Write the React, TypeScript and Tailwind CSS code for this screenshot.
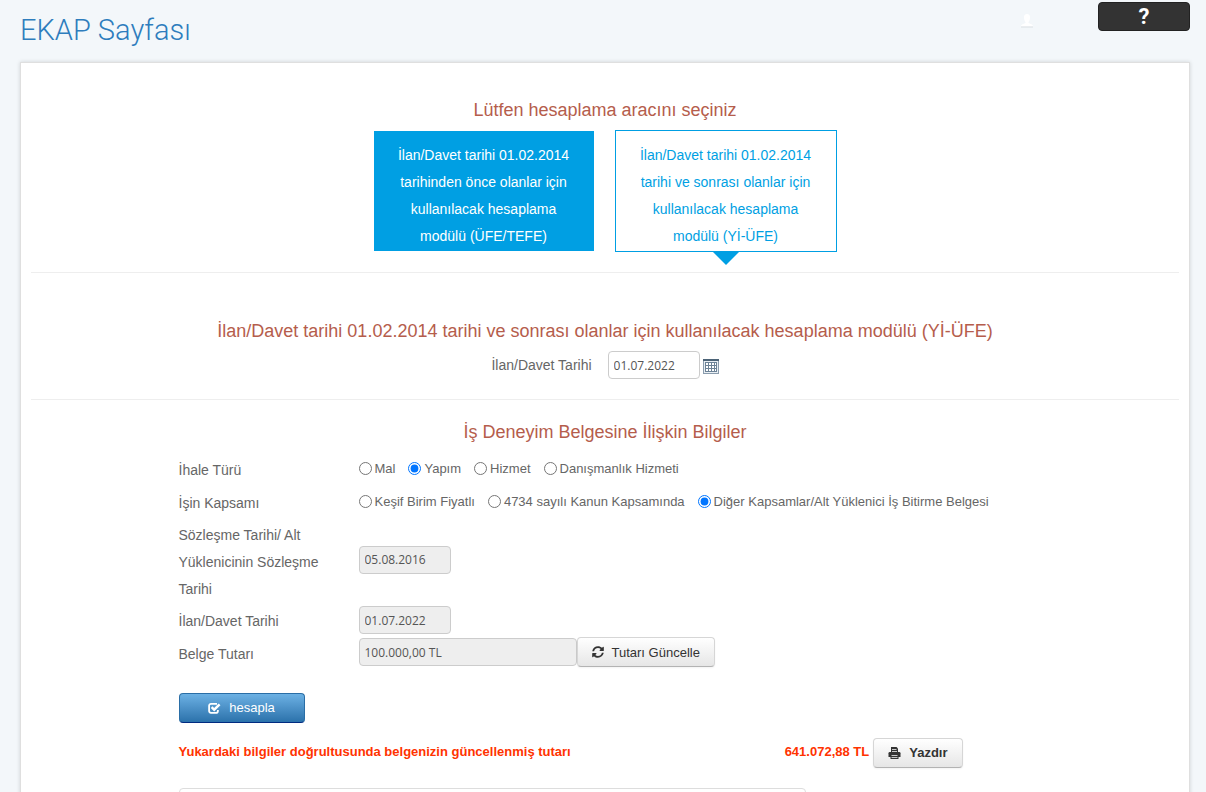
import type { ReactNode } from "react";
import { FaSyncAlt } from "react-icons/fa";

const tenderTypes = ["Mal", "Yapım", "Hizmet", "Danışmanlık Hizmeti"];

const scopes = [
  "Keşif Birim Fiyatlı",
  "4734 sayılı Kanun Kapsamında",
  "Diğer Kapsamlar/Alt Yüklenici İş Bitirme Belgesi",
];

const greyButton =
  "flex h-[30px] cursor-pointer items-center gap-2 rounded border border-[#d6d6d6] border-b-[#b3b3b3] bg-linear-to-b from-white to-[#e6e6e6] text-[13px] text-[#333] shadow-xs";

const readOnlyInput =
  "h-7 rounded border border-[#ccc] bg-[#eee] px-[5px] font-['Open_Sans','Noto_Sans',sans-serif] text-xs text-[#555]";

function SectionTitle({ children }: { children: ReactNode }) {
  return <h2 className="text-center text-lg leading-5 text-[#b55d4c]">{children}</h2>;
}

function CalendarIcon() {
  return (
    <svg width="16" height="16" viewBox="0 0 16 16" shapeRendering="crispEdges" aria-hidden="true">
      <rect x="0" y="1" width="16" height="15" fill="#8a9cad" />
      <rect x="0" y="1" width="16" height="2" fill="#4c6377" />
      <rect x="1" y="3" width="14" height="12" fill="#e8eef3" />
      <rect x="2" y="4" width="12" height="10" fill="#6c8296" />
      {[3, 6, 9, 12].map((x) =>
        [5, 8, 11].map((y) => (
          <rect key={`${x}-${y}`} x={x} y={y} width={x === 12 ? 1 : 2} height="2" fill="#fff" />
        )),
      )}
    </svg>
  );
}

function UserIcon() {
  return (
    <svg width="14" height="14" viewBox="0 0 14 14" aria-hidden="true">
      <path
        d="M7 0C5 0 3.800 1.500 4 3.500C4.100 5.500 4.600 7 5.500 8V9C4 10 1 10 1 12.500H13C13 10 10 10 8.500 9V8C9.400 7 9.900 5.500 10 3.500C10.200 1.500 9 0 7 0Z"
        fill="#fff"
      />
      <path d="M1 13H13" stroke="#dadfe2" />
    </svg>
  );
}

function CheckIcon() {
  return (
    <svg width="13" height="12" viewBox="0 0 13 12" fill="none" stroke="currentColor" aria-hidden="true">
      <path d="M9 1.800H3A1.900 1.900 0 0 0 1.100 3.700V8.900A1.900 1.900 0 0 0 3 10.800H8A1.900 1.900 0 0 0 9.900 8.900V8" strokeWidth="1.800" />
      <path d="M3.600 5.200L6.200 7.700L11.600 2.300" strokeWidth="2.400" />
    </svg>
  );
}

function PrintIcon() {
  return (
    <svg width="13" height="12" viewBox="0 0 13 12" fill="currentColor" aria-hidden="true">
      <path d="M3 0H8.500L10 1.500V5H3Z" />
      <path d="M1.800 5H11.200Q12.500 5 12.500 6.300V10H0.500V6.300Q0.500 5 1.800 5Z" />
      <path d="M2.500 8.500H10.500V12H2.500Z" />
      <path d="M4 2.500H8.500M4 4.500H9M3.500 8.500H9.500M3.500 10.500H9.500" stroke="#eee" strokeWidth="0.800" />
    </svg>
  );
}

function RadioGroup({ name, label, options, selected }: { name: string; label: string; options: string[]; selected: string }) {
  return (
    <div role="radiogroup" aria-label={label} className="flex flex-wrap items-center gap-x-[13px] pb-1 text-[13px]">
      {options.map((option) => (
        <label key={option} className="flex items-center gap-[3px]">
          <input
            type="radio"
            name={name}
            defaultChecked={option === selected}
            className="size-[13px] accent-[#0075ff]"
          />
          {option}
        </label>
      ))}
    </div>
  );
}

export default function App() {
  return (
    <div className="h-screen overflow-hidden bg-[#f3f7fa] pr-4 pl-5 font-['Liberation_Sans',Arial,sans-serif] text-sm text-[#666]">
      <header className="flex h-[62px] items-start justify-between">
        <h1 className="pt-3 font-[Roboto,sans-serif] text-[29px] leading-9 font-light text-[#2e7dbd]">
          EKAP Sayfası
        </h1>
        <div className="flex items-start gap-16 pt-0.5">
          <button type="button" aria-label="Kullanıcı" className="mt-3">
            <UserIcon />
          </button>
          <button
            type="button"
            className="h-[29px] w-[92px] rounded border border-[#222] bg-[#333] font-[Roboto,sans-serif] text-[22px] leading-none font-bold text-white"
          >
            ?
          </button>
        </div>
      </header>

      <main className="border border-[#dfdfdf] bg-white px-[10px] shadow-[0_0_4px_rgba(0,0,0,0.15)]">
        <section className="border-b border-[#eee] pt-[37px] pb-5">
          <SectionTitle>Lütfen hesaplama aracını seçiniz</SectionTitle>
          <div className="mt-[10px] flex items-center justify-center gap-[21px]">
            <button
              type="button"
              className="h-[120px] w-[220px] bg-[#009fe3] px-4 pt-[9px] text-center text-sm leading-[27px] text-white"
            >
              İlan/Davet tarihi 01.02.2014 tarihinden önce olanlar için kullanılacak hesaplama modülü (ÜFE/TEFE)
            </button>
            <button
              type="button"
              className="relative h-[122px] w-[222px] border border-[#009fe3] px-4 pt-[9px] text-center text-sm leading-[27px] text-[#009fe3]"
            >
              İlan/Davet tarihi 01.02.2014 tarihi ve sonrası olanlar için kullanılacak hesaplama modülü (Yİ-ÜFE)
              <span className="absolute top-full left-1/2 -translate-x-1/2 border-x-14 border-t-14 border-x-transparent border-t-[#009fe3]" />
            </button>
          </div>
        </section>

        <section className="border-b border-[#eee] pt-12 pb-5">
          <SectionTitle>
            İlan/Davet tarihi 01.02.2014 tarihi ve sonrası olanlar için kullanılacak hesaplama modülü (Yİ-ÜFE)
          </SectionTitle>
          <div className="mt-[10px] flex items-center justify-center">
            <label htmlFor="notice-date" className="mr-4">
              İlan/Davet Tarihi
            </label>
            <input
              id="notice-date"
              defaultValue="01.07.2022"
              className="h-7 w-[92px] rounded border border-[#ccc] bg-white px-[5px] font-['Open_Sans','Noto_Sans',sans-serif] text-xs text-[#555]"
            />
            <button type="button" aria-label="Takvim" className="ml-[3px] pt-0.5">
              <CalendarIcon />
            </button>
          </div>
        </section>

        <section className="pt-[22px] pb-8">
          <SectionTitle>İş Deneyim Belgesine İlişkin Bilgiler</SectionTitle>
          <form className="mx-auto mt-3 w-full max-w-[853px]" onSubmit={(e) => e.preventDefault()}>
            <div className="grid grid-cols-[150px_1fr] items-center gap-x-[30px] leading-[27px]">
              <span className="py-[3px]">İhale Türü</span>
              <RadioGroup name="tender" label="İhale Türü" options={tenderTypes} selected="Yapım" />

              <span className="py-[3px]">İşin Kapsamı</span>
              <RadioGroup name="scope" label="İşin Kapsamı" options={scopes} selected={scopes[2]} />

              <label htmlFor="contract-date" className="pt-0.5">
                Sözleşme Tarihi/ Alt Yüklenicinin Sözleşme Tarihi
              </label>
              <input id="contract-date" readOnly defaultValue="05.08.2016" className={`${readOnlyInput} mb-1 w-[92px]`} />

              <label htmlFor="tender-date" className="pt-[5px] pb-0.5">
                İlan/Davet Tarihi
              </label>
              <input id="tender-date" readOnly defaultValue="01.07.2022" className={`${readOnlyInput} w-[92px]`} />

              <label htmlFor="amount" className="py-[3px]">
                Belge Tutarı
              </label>
              <div className="flex items-center pb-1">
                <input id="amount" readOnly defaultValue="100.000,00 TL" className={`${readOnlyInput} w-[218px]`} />
                <button type="button" className={`${greyButton} px-[14px]`}>
                  <FaSyncAlt className="size-3" aria-hidden="true" />
                  Tutarı Güncelle
                </button>
              </div>
            </div>

            <button
              type="submit"
              className="mt-[22px] flex h-[30px] w-[126px] cursor-pointer items-center justify-center gap-2 rounded border border-[#2a6ea6] border-b-[#002a80] bg-linear-to-b from-[#6cb1e4] to-[#2b72ab] text-[13px] text-white"
            >
              <CheckIcon />
              hesapla
            </button>

            <div className="mt-[15px] flex w-full max-w-[784px] items-center justify-between text-[13px] font-bold text-[#ff3300]">
              <span className="pb-0.5">Yukardaki bilgiler doğrultusunda belgenizin güncellenmiş tutarı</span>
              <div className="flex items-center gap-1">
                <output className="pb-0.5">641.072,88 TL</output>
                <button type="button" className={`${greyButton} px-[14px] font-bold`}>
                  <PrintIcon />
                  Yazdır
                </button>
              </div>
            </div>
          </form>
          <div className="mx-auto w-full max-w-[853px]">
            <div className="mt-5 h-24 w-full max-w-[627px] rounded border border-[#ddd]" />
          </div>
        </section>
      </main>
    </div>
  );
}
